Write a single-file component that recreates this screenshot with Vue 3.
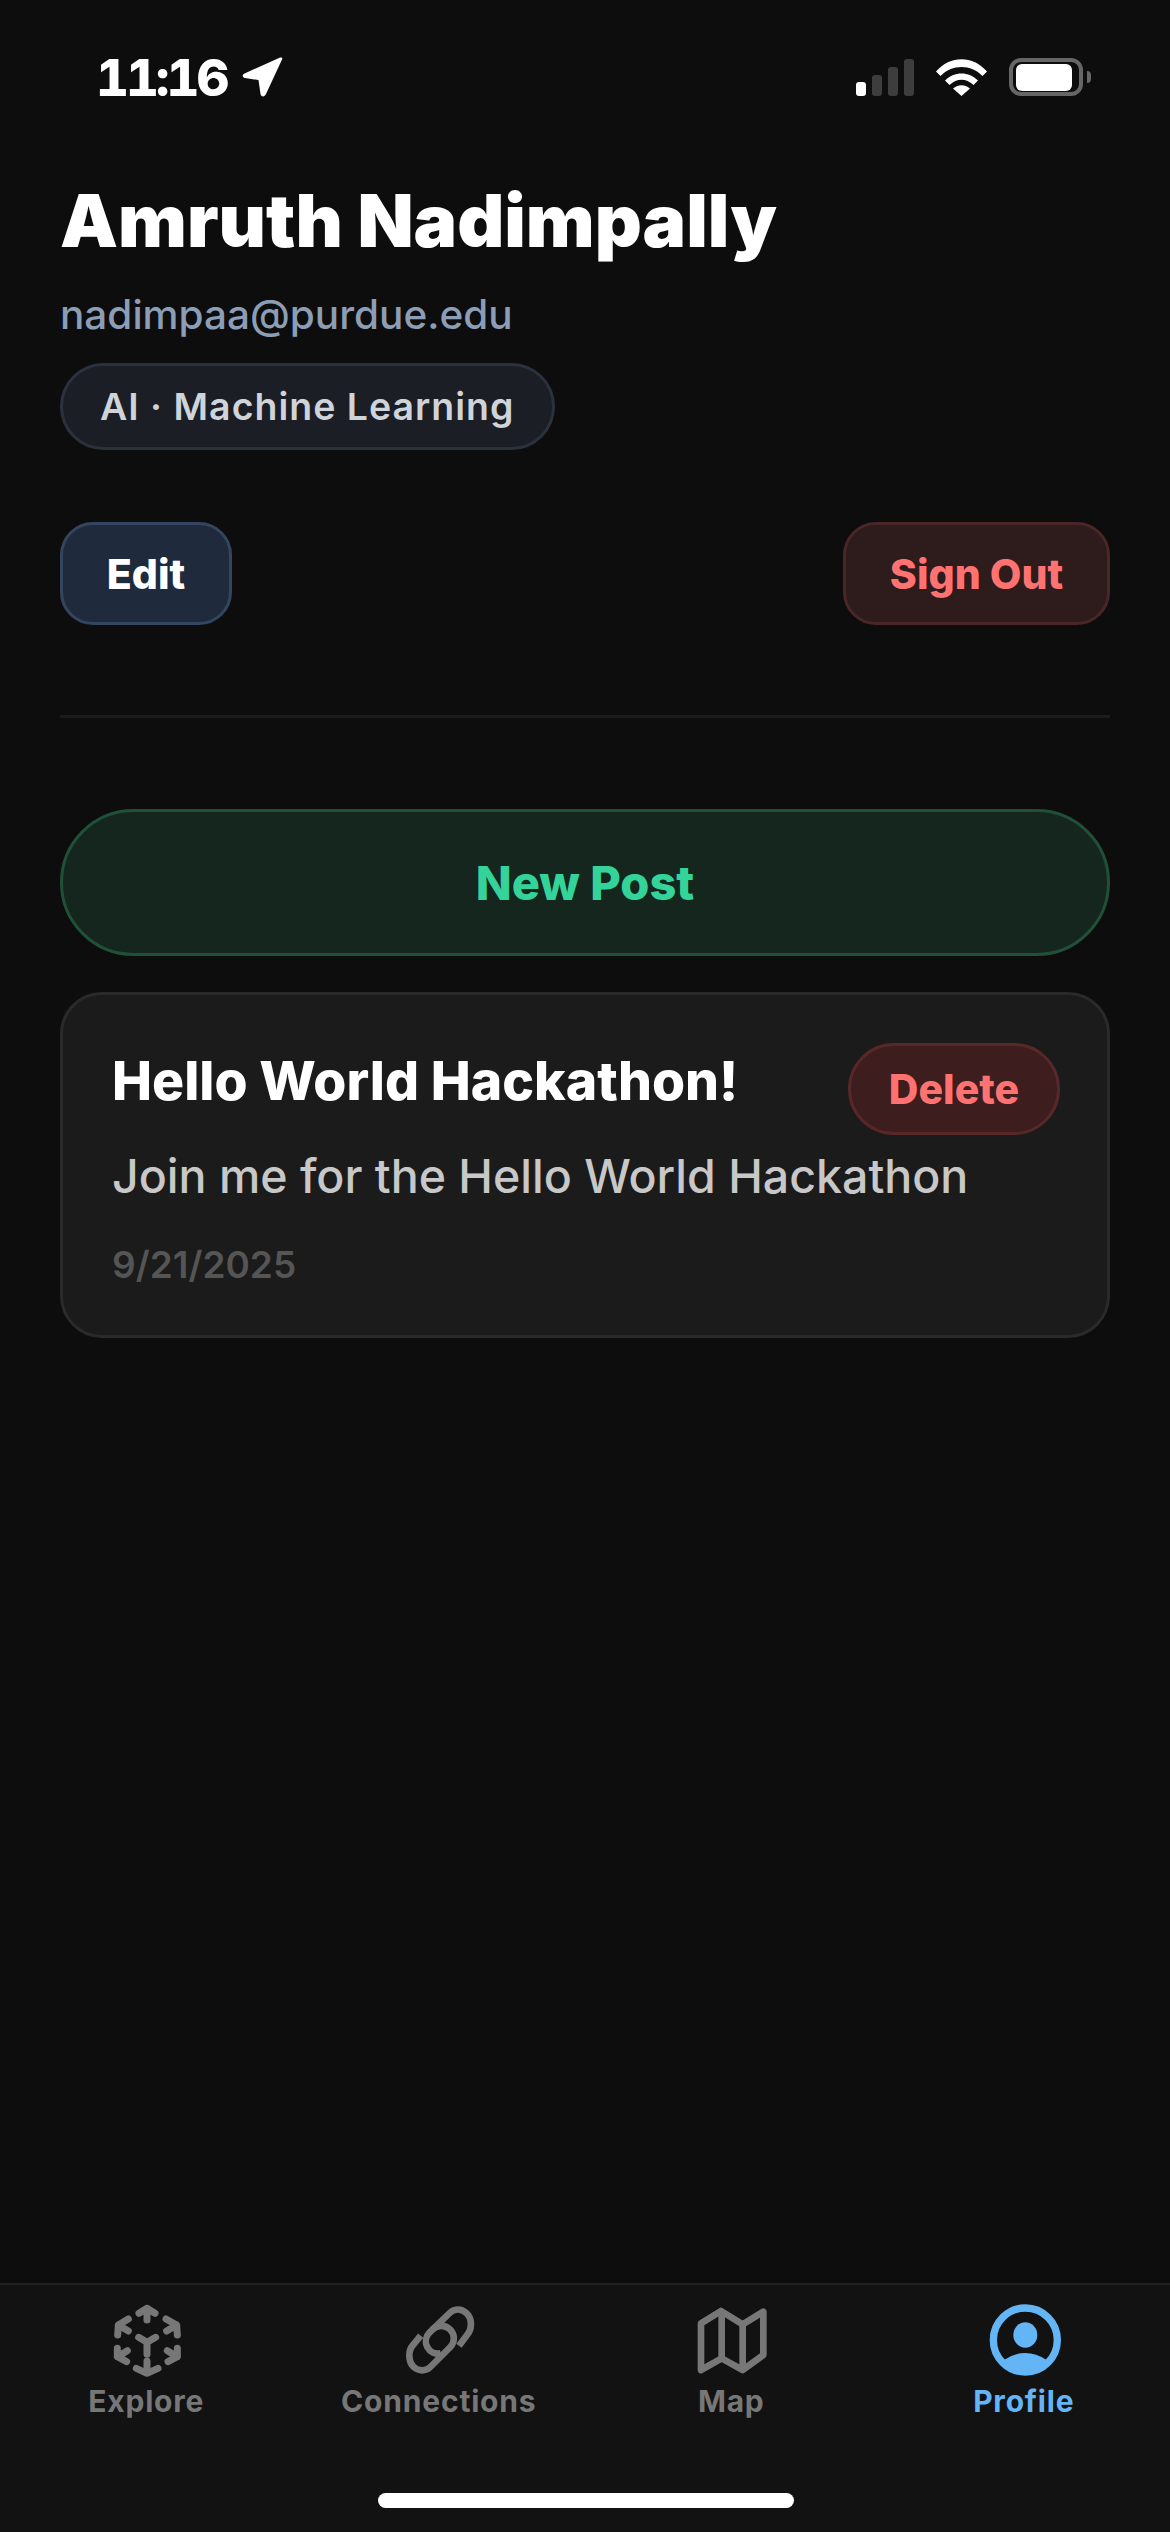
<script setup>
const tabs = [
  { label: 'Explore', key: 'explore' },
  { label: 'Connections', key: 'link' },
  { label: 'Map', key: 'map' },
  { label: 'Profile', key: 'profile', active: true },
]
</script>

<template>
  <div class="screen">
    <header class="status">
      <div class="clock">
        <span>11:16</span>
        <svg class="arrow" viewBox="0 0 44 42"><path d="M41 2.500 L25 37 C23.500 40.500 20 40 19.500 37 L17.500 23 L4 21 C1 20.500 1 17.500 3.500 16.500 L38 1 C40.500 0 42 0.500 41 2.500 Z" fill="#fff"/></svg>
      </div>
      <div class="status-icons">
        <svg class="signal" viewBox="0 0 58 37">
          <rect x="0" y="23" width="10" height="14" rx="3" fill="#fff"/>
          <rect x="16" y="16" width="10" height="21" rx="3" fill="#3d3d3d"/>
          <rect x="32" y="8" width="10" height="29" rx="3" fill="#3d3d3d"/>
          <rect x="48" y="0" width="10" height="37" rx="3" fill="#3d3d3d"/>
        </svg>
        <svg class="wifi" viewBox="0 0 51 37">
          <path d="M0 12.500 C14 -4 37 -4 51 12.500 L46.500 17 C35 5 16 5 4.500 17 Z" fill="#fff"/>
          <path d="M9 21.500 C18 12 33 12 42 21.500 L37.500 26 C30 19 21 19 13.500 26 Z" fill="#fff"/>
          <path d="M25.500 37 L17 29.500 C22 25 29 25 34 29.500 Z" fill="#fff"/>
        </svg>
        <div class="battery"><div class="charge"></div></div>
        <div class="nub"></div>
      </div>
    </header>

    <main class="content">
      <section class="profile">
        <h1>Amruth Nadimpally</h1>
        <div class="email">nadimpaa@purdue.edu</div>
        <div class="chip">AI · Machine Learning</div>
      </section>

      <div class="actions">
        <button class="btn edit">Edit</button>
        <button class="btn signout">Sign Out</button>
      </div>

      <div class="divider"></div>

      <button class="new-post">New Post</button>

      <article class="card">
        <div class="card-head">
          <h2>Hello World Hackathon!</h2>
          <button class="delete">Delete</button>
        </div>
        <p class="body">Join me for the Hello World Hackathon</p>
        <div class="date">9/21/2025</div>
      </article>
    </main>

    <nav class="tabbar">
      <div class="tabs">
        <div v-for="t in tabs" :key="t.key" class="tab" :class="{ active: t.active }">
          <svg v-if="t.key === 'explore'" class="icon" viewBox="3 0 270 255" fill="none" stroke="#777" stroke-width="21" stroke-linecap="round" stroke-linejoin="round">
            <path d="M141 75V40M117 55l24-15 24 15"/>
            <path d="M85 72 55 90l-2 30M55 90l30 18"/>
            <path d="M198 72l32 18 2 30M230 90l-30 18"/>
            <path d="M52 160v25l28 15M52 185l30-18"/>
            <path d="M232 160v25l-28 15M232 185l-30-18"/>
            <path d="M109 220l32 15 33-15M141 235v-37"/>
            <path d="M116 127l25 15 26-15M141 142v36"/>
          </svg>
          <svg v-else-if="t.key === 'link'" class="icon" viewBox="-3 0 270 255" fill="none" stroke="#777" stroke-width="20">
            <path d="M192 152L216 120C232 102 232 70 214 54C196 38 176 42 164 54L104 112A37 37 0 0 0 137 175"/>
            <path d="M77 122L54 150C38 168 40 200 56 216C76 232 96 226 106 216L166 156A37 37 0 0 0 112 104"/>
          </svg>
          <svg v-else-if="t.key === 'map'" class="icon" viewBox="-12 0 270 255" fill="none" stroke="#777" stroke-width="20" stroke-linejoin="round">
            <path d="M33 85 93 48 158 88 220 50V180L158 225 95 190 33 225Z"/>
            <path d="M95 48V190M158 88V225"/>
          </svg>
          <svg v-else class="icon" viewBox="-3 0 270 255">
            <circle cx="136" cy="135" r="96" fill="none" stroke="#64b5f6" stroke-width="22"/>
            <ellipse cx="136" cy="120" rx="36" ry="38" fill="#64b5f6"/>
            <path d="M72 195 Q136 153 200 195 A88 88 0 0 1 72 195 Z" fill="#64b5f6"/>
          </svg>
          <span class="label">{{ t.label }}</span>
        </div>
      </div>
      <div class="home"></div>
    </nav>
  </div>
</template>

<style>
html, body { margin: 0; background: #0d0d0d; }
</style>

<style scoped>
.screen {
  width: 1170px;
  height: 2532px;
  background: #0d0d0d;
  display: flex;
  flex-direction: column;
  font-family: Inter, "Liberation Sans", sans-serif;
  color: #fff;
  overflow: hidden;
}
.status {
  height: 132px;
  padding: 53px 79px 0 96px;
  box-sizing: border-box;
  display: flex;
  justify-content: space-between;
  align-items: flex-start;
  flex: none;
}
.clock {
  display: flex;
  align-items: center;
  gap: 15px;
  font-size: 51px;
  font-weight: 800;
  line-height: 50px;
  font-feature-settings: "tnum";
  letter-spacing: -3px;
}
.arrow { width: 44px; height: 42px; }
.status-icons { display: flex; align-items: flex-end; padding-top: 5px; }
.signal { width: 58px; height: 37px; margin-right: 22px; }
.wifi { width: 51px; height: 37px; margin-right: 22px; }
.battery {
  width: 74px;
  height: 38px;
  border: 4px solid #666;
  border-radius: 12px;
  padding: 2px 7px 1px 3px;
  box-sizing: border-box;
}
.charge { width: 100%; height: 100%; background: #fff; border-radius: 6px; }
.nub { width: 4px; height: 12px; background: #666; border-radius: 0 4px 4px 0; margin: 0 0 13px 4px; }

.content {
  flex: 1;
  padding: 0 60px;
  display: flex;
  flex-direction: column;
}
.profile { padding-top: 44px; }
h1 {
  margin: 0;
  font-size: 73px;
  font-weight: 900;
  line-height: 90px;
}
.email {
  margin-top: 25px;
  font-size: 40.500px;
  font-weight: 500;
  line-height: 48px;
  color: #8c9db6;
}
.chip {
  margin-top: 24px;
  display: inline-block;
  height: 87px;
  line-height: 81px;
  box-sizing: border-box;
  padding: 0 37px;
  border: 3px solid #2a323e;
  border-radius: 44px;
  background: #1b1e24;
  color: #cfd3da;
  font-size: 37.500px;
  font-weight: 600;
  letter-spacing: 1px;
}
.actions {
  margin-top: 72px;
  display: flex;
  justify-content: space-between;
}
.btn {
  height: 103px;
  box-sizing: border-box;
  border-radius: 33px;
  font-family: inherit;
  font-size: 41px;
  font-weight: 800;
  padding: 0;
}
.edit {
  width: 172px;
  background: #1f2a3c;
  border: 3px solid #33455f;
  color: #fff;
}
.signout {
  width: 267px;
  background: #2e1c1c;
  border: 3px solid #4a2626;
  color: #ff7272;
}
.divider { margin-top: 90px; height: 3px; background: #1c1c1f; }
.new-post {
  margin-top: 91px;
  height: 147px;
  border-radius: 74px;
  background: #15261e;
  border: 3px solid #205038;
  color: #34d399;
  font-family: inherit;
  font-size: 47px;
  font-weight: 800;
}
.card {
  margin-top: 36px;
  height: 346px;
  box-sizing: border-box;
  padding: 48px 47px 0 49px;
  background: #1b1b1b;
  border: 3px solid #2a2a2a;
  border-radius: 42px;
}
.card-head { display: flex; justify-content: space-between; align-items: flex-start; }
h2 {
  margin: 0;
  padding-top: 6px;
  font-size: 53.500px;
  font-weight: 800;
  line-height: 63px;
}
.delete {
  width: 212px;
  height: 92px;
  box-sizing: border-box;
  border-radius: 46px;
  background: #3d1d1d;
  border: 3px solid #582828;
  color: #ff7272;
  font-family: inherit;
  font-size: 41px;
  font-weight: 800;
  padding: 0;
}
.body {
  margin: 11px 0 0;
  font-size: 46.500px;
  font-weight: 500;
  line-height: 60px;
  color: #c8c8c8;
}
.date {
  margin-top: 37px;
  font-size: 37px;
  line-height: 44px;
  font-weight: 600;
  color: #555;
}
.tabbar {
  flex: none;
  height: 249px;
  box-sizing: border-box;
  background: #121212;
  border-top: 2px solid #222;
  position: relative;
}
.tabs {
  display: grid;
  grid-template-columns: repeat(4, 1fr);
  padding-top: 10px;
}
.tab {
  display: flex;
  flex-direction: column;
  align-items: center;
  color: #777;
}
.tab.active { color: #64b5f6; }
.icon { width: 90px; height: 85px; display: block; }
.label {
  margin-top: 1px;
  font-size: 30px;
  line-height: 40px;
  font-weight: 700;
  letter-spacing: 0.800px;
}
.home {
  position: absolute;
  left: 378px;
  bottom: 24px;
  width: 416px;
  height: 15px;
  border-radius: 8px;
  background: #fff;
}
</style>
